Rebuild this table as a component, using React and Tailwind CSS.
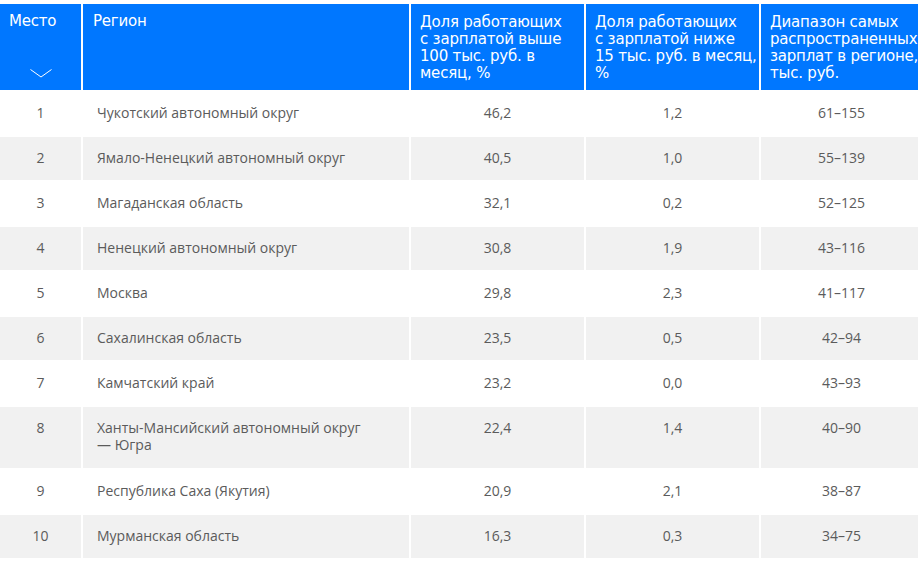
import React from "react";

const ROWS = [
  [1, "Чукотский автономный округ", "46,2", "1,2", "61–155"],
  [2, "Ямало-Ненецкий автономный округ", "40,5", "1,0", "55–139"],
  [3, "Магаданская область", "32,1", "0,2", "52–125"],
  [4, "Ненецкий автономный округ", "30,8", "1,9", "43–116"],
  [5, "Москва", "29,8", "2,3", "41–117"],
  [6, "Сахалинская область", "23,5", "0,5", "42–94"],
  [7, "Камчатский край", "23,2", "0,0", "43–93"],
  [8, "Ханты-Мансийский автономный округ — Югра", "22,4", "1,4", "40–90"],
  [9, "Республика Саха (Якутия)", "20,9", "2,1", "38–87"],
  [10, "Мурманская область", "16,3", "0,3", "34–75"],
];

const HEADERS = [
  ["Доля работающих", "с зарплатой выше", "100 тыс. руб. в", "месяц, %"],
  ["Доля работающих", "с зарплатой ниже", "15 тыс. руб. в месяц,", "%"],
  ["Диапазон самых", "распространенных", "зарплат в регионе,", "тыс. руб."],
];

const headFont = { fontFamily: "'DejaVu Sans', sans-serif" };

export default function App() {
  return (
    <div className="w-[922px] h-[562px] bg-white overflow-hidden pt-[4px]" style={{ fontFamily: "'Open Sans', sans-serif" }}>
      <div className="grid grid-cols-[81px_326px_173px_173px_157px] gap-[2px] w-[918px]">
        {/* header */}
        <div className="bg-[#0077ff] h-[86px] flex flex-col items-center text-white">
          <div className="w-full pl-[9px] pt-[9px] text-[15px] leading-[17px] tracking-[-0.2px]" style={headFont}>Место</div>
          <svg className="mt-[39px]" width="22" height="9" viewBox="0 0 22 9" fill="none">
            <path d="M0.5 0.5 L11 8 L21.5 0.5" stroke="white" strokeWidth="1" />
          </svg>
        </div>
        <div className="bg-[#0077ff] h-[86px] pl-[10px] pt-[9px] text-white text-[15px] leading-[17px] tracking-[-0.2px]" style={headFont}>Регион</div>
        {HEADERS.map((lines, i) => (
          <div key={i} className="bg-[#0077ff] h-[86px] pl-[9px] pt-[10px] text-white text-[15px] leading-[17px] tracking-[-0.2px] whitespace-nowrap overflow-hidden" style={headFont}>
            {lines.map((l, j) => <div key={j}>{l}</div>)}
          </div>
        ))}

        {/* body */}
        {ROWS.map(([n, region, a, b, c], i) => {
          const bg = i % 2 === 1 ? "bg-[#f1f1f1]" : "bg-white";
          const cell = `${bg} pt-[12px] pb-[14px] leading-[17px] text-[14px] text-[#5b5b5b] ${n === 8 ? "min-h-[61px]" : ""}`;
          return (
            <React.Fragment key={n}>
              <div className={`${cell} text-center`}>{n}</div>
              <div className={`${cell} pl-[14px] pr-[36px]`}>{region}</div>
              <div className={`${cell} text-center`}>{a}</div>
              <div className={`${cell} text-center`}>{b}</div>
              <div className={`${cell} text-center pl-[4px]`}>{c}</div>
            </React.Fragment>
          );
        })}
      </div>
    </div>
  );
}
